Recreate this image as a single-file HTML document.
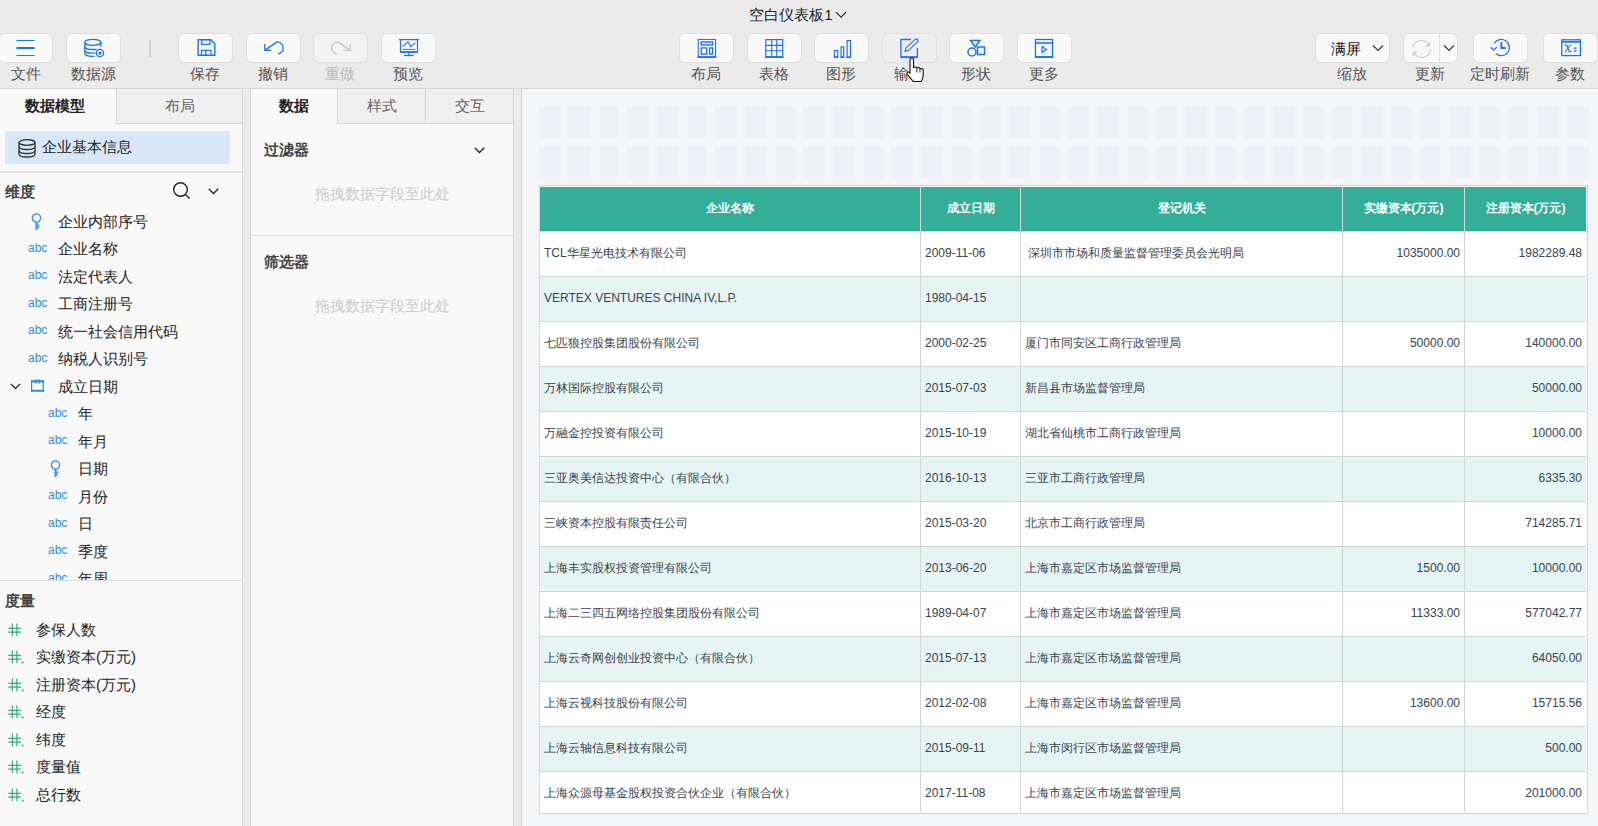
<!DOCTYPE html>
<html><head><meta charset="utf-8">
<style>
*{box-sizing:border-box;margin:0;padding:0}
html,body{width:1598px;height:826px;overflow:hidden;background:#ebebeb;font-family:"Liberation Sans",sans-serif;color:#333}
#title{position:absolute;left:-1px;top:6px;width:1598px;text-align:center;font-size:15px;color:#222;line-height:18px}
.tb{position:absolute;top:34px;width:53px;height:28px;background:#f9f9f9;border-radius:5px;box-shadow:0 0 0 1px #e0e0e0,0 1px 1px rgba(0,0,0,.10)}
.tb svg{position:absolute;left:50%;top:50%;transform:translate(-50%,-50%);overflow:visible}
.lbl{position:absolute;top:65px;width:80px;text-align:center;font-size:15px;line-height:17px;color:#555}
.sep{position:absolute;left:149px;top:40px;width:2px;height:17px;background:#d0d0d0}
#tbline{position:absolute;left:0;top:88px;width:1598px;height:1px;background:#d9d9d9}
.panel{position:absolute;top:88px;height:738px;background:#f9f9f9;border:1px solid #d6d6d6;border-bottom:none}
.tab{position:absolute;top:0;height:35px;line-height:34px;text-align:center;font-size:15px;color:#666;background:#f0f0f0;border-bottom:1px solid #d6d6d6}
.tab.on{background:#f9f9f9;color:#222;font-weight:bold;border-bottom:none}
.it{position:absolute;font-size:15px;line-height:18px;color:#222;white-space:nowrap}
.abc{position:absolute;font-size:12px;line-height:14px;color:#2a8cf3;letter-spacing:0;margin-top:-1px}
.hd{position:absolute;font-size:15px;line-height:18px;font-weight:bold;color:#444}
.ph{position:absolute;left:0;width:262px;text-align:center;font-size:15px;line-height:18px;color:#cbcbcb}
.hash{position:absolute;left:8px;width:16px;height:14px;margin-top:1px}
/* table */
#tbl{position:absolute;left:539px;top:185px;width:1049px;height:629px;border:1px solid #d4d4d4;padding-top:1px;padding-right:1px;background:#fff;overflow:hidden}
table{border-collapse:separate;border-spacing:0;table-layout:fixed;width:1046px;font-size:12px;color:#3a4350}
th{background:#33ae98;color:#fff;height:45px;font-weight:bold;border-left:1px solid #d8d8d8;border-bottom:1px solid #d4d4d4;text-align:center;padding:0 0 2px 0}
td{height:45px;border-left:1px solid #d4d4d4;border-bottom:1px solid #d4d4d4;padding:0 4px 2px 4px;white-space:nowrap;overflow:hidden}
th:first-child,td:first-child{border-left:none}
tr.a td{background:#e6f5f3}
td.r{text-align:right}
.sq{position:absolute;width:21.5px;height:32px;background:#eff0f5}
</style></head><body>
<div id="title">空白仪表板1 <svg width="12" height="8" viewBox="0 0 12 8" style="vertical-align:1px;margin-left:-2px"><path d="M1 1.2 L6 6.2 L11 1.2" fill="none" stroke="#222" stroke-width="1.2"/></svg></div>

<!-- left toolbar group -->
<div class="tb" style="left:-1px"><svg style="margin:-0.7px 0 0 0.5px" width="20" height="18" viewBox="0 0 20 18"><path d="M1.5 3.5H19.5M1.5 18.5H19.5" stroke="#1a73f5" stroke-width="1.2" fill="none" transform="translate(-1,-1)"/><path d="M0.5 10H18.5" stroke="#1a73f5" stroke-width="2" fill="none"/></svg></div><div class="lbl" style="left:-14px">文件</div>
<div class="tb" style="left:67px"><svg width="20" height="19" viewBox="0 0 20 19"><g fill="none" stroke="#1a73f5" stroke-width="1.3"><ellipse cx="8.8" cy="3.8" rx="8" ry="3"/><path d="M0.8 3.8V15M16.8 3.8V8"/><path d="M0.8 8.5C1.5 10.5 4.5 11 8 11H12.5"/><path d="M0.8 12.3C1.5 14.3 4.5 14.7 8 14.7H11"/><path d="M0.8 15C1.5 17 4 17.8 8 17.8H10.5"/><circle cx="15.9" cy="14.5" r="3.6"/></g><circle cx="15.9" cy="14.5" r="1.5" fill="#1a73f5"/></svg></div><div class="lbl" style="left:53px">数据源</div>
<div class="sep"></div>
<div class="tb" style="left:179px"><svg width="18" height="18" viewBox="0 0 18 18"><g fill="none" stroke="#1a73f5"><path d="M1.2 0.8H13.8L17.8 4.8V16.2H1.2Z" stroke-width="1.4"/><path d="M4.7 0.8V5.4H12.9V0.8" stroke-width="1.2"/><path d="M4.5 16.2V11.4H14.1V16.2M8.8 11.4V16.2" stroke-width="1.2"/></g></svg></div><div class="lbl" style="left:165px">保存</div>
<div class="tb" style="left:247px"><svg width="20" height="16" viewBox="0 0 20 16"><g fill="none" stroke="#1a73f5" stroke-width="1.3"><path d="M0.8 4.1V10.4H7.1"/><path d="M0.8 10.4L13 1.9A6.1 6.1 0 0 1 14.2 14"/></g></svg></div><div class="lbl" style="left:233px">撤销</div>
<div class="tb" style="left:314px;background:#f3f3f3"><svg width="20" height="16" viewBox="0 0 20 16"><g fill="none" stroke="#c5c9c9" stroke-width="1.3"><path d="M19.2 4.1V10.4H12.9"/><path d="M19.2 10.4L7 1.9A6.1 6.1 0 0 0 5.8 14"/></g></svg></div><div class="lbl" style="left:300px;color:#b8b8b8">重做</div>
<div class="tb" style="left:382px"><svg width="20" height="18" viewBox="0 0 20 18"><g fill="none" stroke="#1a73f5"><path d="M0 0.6H20" stroke-width="1.3"/><path d="M1.5 0.6V12.8H18.5V0.6" stroke-width="1.2"/><path d="M1.5 12.9H18.5" stroke-width="1.8"/><path d="M3.7 7.7L8.9 2.9L11.7 7.7L16.5 3.9" stroke-width="1.1"/><path d="M3.7 10.4H16.5" stroke-width="1"/><path d="M9.9 13.5V16.5" stroke-width="1.2"/><path d="M5.1 16.5H14.8" stroke-width="1.3"/></g></svg></div><div class="lbl" style="left:368px">预览</div>

<!-- middle group -->
<div class="tb" style="left:680px"><svg width="20" height="20" viewBox="0 0 20 20"><g fill="none" stroke="#1a73f5"><rect x="1.2" y="1.5" width="17.4" height="17.6" stroke-width="1.1"/><path d="M0.7 19.1H19.1" stroke-width="1.8"/><rect x="4.2" y="4" width="11.4" height="3" stroke-width="1.4"/><rect x="4.2" y="9.9" width="5.5" height="6.2" stroke-width="1.3"/><rect x="12.6" y="9.9" width="3" height="6.2" stroke-width="1.3"/></g></svg></div><div class="lbl" style="left:666px">布局</div>
<div class="tb" style="left:748px"><svg style="margin-left:-1px" width="20" height="20" viewBox="0 0 20 20"><g fill="none" stroke="#1a73f5"><rect x="1.8" y="1.6" width="16.9" height="17.5" stroke-width="1.2"/><path d="M1.2 19.1H19.3" stroke-width="1.8"/><path d="M7.75 1.6V19M12.75 1.6V19M1.8 7.4H18.7M1.8 12.7H18.7" stroke-width="1.1"/></g></svg></div><div class="lbl" style="left:734px">表格</div>
<div class="tb" style="left:815px"><svg width="20" height="20" viewBox="0 0 20 20"><g fill="none" stroke="#1a73f5" stroke-width="1.2"><rect x="2.5" y="12.6" width="3.2" height="6.6"/><rect x="9.1" y="8.9" width="2.6" height="10.3"/><rect x="15.1" y="2.6" width="3.4" height="16.6"/><path d="M1.9 19.2H6.3M8.5 19.2H12.3M14.5 19.2H19.1" stroke-width="1.6"/></g></svg></div><div class="lbl" style="left:801px">图形</div>
<div class="tb" style="left:883px;background:#efefef"><svg width="20" height="20" viewBox="0 0 20 20"><g fill="none" stroke="#1a73f5"><path d="M11 1.5H0.9V19.1H17.4V10" stroke-width="1.3"/><path d="M0.9 19.2H17.4" stroke-width="1.8"/><path d="M5 13.5L6.1 9.9L15.1 1.4C15.8 0.8 16.8 0.8 17.5 1.5C18.2 2.2 18.2 3.2 17.5 3.9L8.6 12.4Z" stroke-width="1.1" stroke-linejoin="round"/></g></svg></div><div class="lbl" style="left:869px">输出</div>
<div class="tb" style="left:950px"><svg width="20" height="18" viewBox="0 0 20 18"><g fill="none" stroke="#1a73f5" stroke-width="1.5"><path d="M3.5 1.5H13L8.25 8Z"/><circle cx="5" cy="13" r="4"/><rect x="10.5" y="8" width="7" height="7.5"/></g></svg></div><div class="lbl" style="left:936px">形状</div>
<div class="tb" style="left:1018px"><svg style="margin-left:-1px" width="20" height="20" viewBox="0 0 20 20"><g fill="none" stroke="#1a73f5"><rect x="1.5" y="1.5" width="17" height="17.4" stroke-width="1.3"/><path d="M1 19.1H19" stroke-width="1.7"/><path d="M1.5 5H18.5" stroke-width="1.6"/><path d="M8 8.5L12.6 11.5L8 14.5Z" stroke-width="1.2"/></g></svg></div><div class="lbl" style="left:1004px">更多</div>
<svg style="position:absolute;left:906px;top:57px" width="20" height="26" viewBox="0 0 20 26"><path d="M5.75 1C6.8 1 7.5 1.8 7.5 2.8V10.5C8 9.8 10.5 9.8 10.8 11C11.3 10.3 13.7 10.5 14 11.8C14.5 11.2 17 11.5 17.2 13V18.5C17.2 21 16 23 15.3 24.5H7.2C6 22.5 2.5 19 1.2 17.2C0.5 16 1.5 14.5 3 15.3L4 16.2V2.8C4 1.8 4.7 1 5.75 1Z" fill="#fff" stroke="#111" stroke-width="1.1" stroke-linejoin="round"/><path d="M10.8 11.5V15.5M14 12.2V15.5" stroke="#111" stroke-width="0.9"/></svg>

<!-- right group -->
<div class="tb" style="left:1316px;width:73px"><span style="position:absolute;left:15px;top:6px;font-size:15px;line-height:18px;color:#111">满屏</span><svg style="left:62px" width="12" height="8" viewBox="0 0 12 8"><path d="M1 1.5L6 6.5L11 1.5" fill="none" stroke="#333" stroke-width="1.1"/></svg></div><div class="lbl" style="left:1312px">缩放</div>
<div class="tb" style="left:1404px;width:53px"><svg style="left:17px" width="20" height="18" viewBox="0 0 20 18"><g fill="none" stroke="#d0d2d2" stroke-width="1.2"><path d="M1.8 9.2A8.5 8.5 0 0 1 17.3 5.2"/><path d="M19.3 10.4A8.5 8.5 0 0 1 3.5 14.2"/></g><g fill="#d0d2d2"><path d="M19.2 2.3V7.4H14.1Z"/><path d="M1.6 17.6V12.5H6.7Z"/></g></svg><div style="position:absolute;left:35px;top:0;width:1px;height:28px;background:#e2e2e2"></div><svg style="left:45px" width="12" height="8" viewBox="0 0 12 8"><path d="M1 1.5L6 6.5L11 1.5" fill="none" stroke="#333" stroke-width="1.1"/></svg></div><div class="lbl" style="left:1390px">更新</div>
<div class="tb" style="left:1474px"><svg width="20" height="20" viewBox="0 0 20 20"><g fill="none" stroke="#1a73f5" stroke-width="1.25"><path d="M3.25 5.5A8.1 8.1 0 1 1 4.8 15.5"/><path d="M-0.2 9.25L2.6 12.1L5.75 9.25"/><path d="M10.4 4V10H14.8" stroke-width="1.8"/></g></svg></div><div class="lbl" style="left:1460px">定时刷新</div>
<div class="tb" style="left:1544px;width:53px"><svg width="20" height="18" viewBox="0 0 20 18"><g fill="none" stroke="#1a73f5"><rect x="0.8" y="0.8" width="18.6" height="15.8" stroke-width="1.3"/><path d="M0.8 2.9H19.4" stroke-width="1.7"/><path d="M3.6 6.2C5.6 5.6 6.6 7.2 7.1 9.6C7.6 12 8.6 13.2 10.6 12.5" stroke-width="1.2"/><path d="M10.2 6C8.2 6.4 6.2 9.8 4.4 13.2" stroke-width="1.2"/><path d="M12.8 9.2H15.6M12.8 11.9H15.6" stroke-width="1.3"/></g></svg></div><div class="lbl" style="left:1530px">参数</div>

<div id="tbline"></div>

<!-- left panel -->
<div class="panel" style="left:-1px;width:244px">
  <div class="tab on" style="left:0;width:116px;padding-right:7px">数据模型</div>
  <div class="tab" style="left:116px;width:126px;border-left:1px solid #d6d6d6">布局</div>
  <div style="position:absolute;left:5px;top:42px;width:225px;height:33px;background:#d9e8f9"></div>
  <svg style="position:absolute;left:18px;top:50px" width="19" height="19" viewBox="0 0 19 19"><g fill="none" stroke="#333" stroke-width="1.3"><ellipse cx="9" cy="3.5" rx="8" ry="2.8"/><path d="M1 3.5V15C1 16.8 4.5 18 9 18S17 16.8 17 15V3.5"/><path d="M1 7.5C1 9.3 4.5 10.5 9 10.5S17 9.3 17 7.5"/><path d="M1 11.5C1 13.3 4.5 14.5 9 14.5S17 13.3 17 11.5"/></g></svg>
  <div class="it" style="left:42px;top:49px">企业基本信息</div>
  <div style="position:absolute;left:0;top:82px;width:242px;height:2px;background:#e4e4e4"></div>
  <div class="hd" style="left:5px;top:94px">维度</div>
  <svg style="position:absolute;left:173px;top:93px" width="18" height="18" viewBox="0 0 18 18"><g fill="none" stroke="#222" stroke-width="1.4"><circle cx="7.5" cy="7.5" r="6.8"/><path d="M12.5 12.5L16.5 16.5"/></g></svg>
  <svg style="position:absolute;left:208px;top:99px" width="12" height="7" viewBox="0 0 12 7"><path d="M0.8 0.8L5.5 5.5L10.2 0.8" fill="none" stroke="#222" stroke-width="1.3"/></svg>
  <div style="position:absolute;left:0;top:121px;width:242px;height:371px;overflow:hidden">
    <!-- rows: centers at 221..578 in page => relative to this box top (88+1+120=209) -->
    <svg style="position:absolute;left:30.5px;top:3px" width="11" height="17" viewBox="0 0 11 17"><g fill="none" stroke="#3c8ff0"><circle cx="5.5" cy="5" r="4.1" stroke-width="1.4"/><path d="M5.5 9V17" stroke-width="2"/><path d="M5.5 12.2H8.3M5.5 14.6H8" stroke-width="1.5"/></g></svg>
    <div class="it" style="left:58px;top:3px">企业内部序号</div>
    <div class="abc" style="left:28px;top:32px">abc</div><div class="it" style="left:58px;top:30px">企业名称</div>
    <div class="abc" style="left:28px;top:59px">abc</div><div class="it" style="left:58px;top:58px">法定代表人</div>
    <div class="abc" style="left:28px;top:87px">abc</div><div class="it" style="left:58px;top:85px">工商注册号</div>
    <div class="abc" style="left:28px;top:114px">abc</div><div class="it" style="left:58px;top:113px">统一社会信用代码</div>
    <div class="abc" style="left:28px;top:142px">abc</div><div class="it" style="left:58px;top:140px">纳税人识别号</div>
    <svg style="position:absolute;left:10px;top:172.5px" width="12" height="7" viewBox="0 0 12 7"><path d="M0.8 0.8L5.5 5.5L10.2 0.8" fill="none" stroke="#111" stroke-width="1.15"/></svg>
    <svg style="position:absolute;left:30px;top:169px" width="15" height="14" viewBox="0 0 15 14"><g fill="#1a8cf0"><rect x="1" y="1.2" width="12.8" height="2.2"/><rect x="1" y="10.8" width="12.8" height="1.9"/><rect x="1" y="1.2" width="1.2" height="11.5"/><rect x="12.6" y="1.2" width="1.2" height="11.5"/><rect x="4.9" y="0.3" width="1.3" height="4.3"/><rect x="8.4" y="0.3" width="1.3" height="4.3"/></g></svg>
    <div class="it" style="left:58px;top:168px">成立日期</div>
    <div class="abc" style="left:48px;top:197px">abc</div><div class="it" style="left:78px;top:195px">年</div>
    <div class="abc" style="left:48px;top:224px">abc</div><div class="it" style="left:78px;top:223px">年月</div>
    <svg style="position:absolute;left:50px;top:250px" width="11" height="17" viewBox="0 0 11 17"><g fill="none" stroke="#3c8ff0"><circle cx="5.5" cy="5" r="4.1" stroke-width="1.4"/><path d="M5.5 9V17" stroke-width="2"/><path d="M5.5 12.2H8.3M5.5 14.6H8" stroke-width="1.5"/></g></svg>
    <div class="it" style="left:78px;top:250px">日期</div>
    <div class="abc" style="left:48px;top:279px">abc</div><div class="it" style="left:78px;top:278px">月份</div>
    <div class="abc" style="left:48px;top:307px">abc</div><div class="it" style="left:78px;top:305px">日</div>
    <div class="abc" style="left:48px;top:334px">abc</div><div class="it" style="left:78px;top:333px">季度</div>
    <div class="abc" style="left:48px;top:362px">abc</div><div class="it" style="left:78px;top:360px">年周</div>
  </div>
  <div style="position:absolute;left:0;top:491px;width:242px;height:1px;background:#dedede"></div>
  <div class="hd" style="left:5px;top:503px">度量</div>
  <div class="hash" style="top:533px"><svg width="16" height="14" viewBox="0 0 16 14"><path d="M4.4 0.6V13.2M8.9 0.6V13.2M0.3 5.3H13M0.3 9.1H13" stroke="#35a78a" stroke-width="1.2" fill="none"/></svg></div><div class="it" style="left:36px;top:532px">参保人数</div>
  <div class="hash" style="top:560px"><svg width="16" height="14" viewBox="0 0 16 14"><path d="M4.4 0.6V13.2M8.9 0.6V13.2M0.3 5.3H13M0.3 9.1H13" stroke="#35a78a" stroke-width="1.2" fill="none"/><circle cx="14.6" cy="12.4" r="1" fill="#35a78a"/></svg></div><div class="it" style="left:36px;top:559px">实缴资本(万元)</div>
  <div class="hash" style="top:588px"><svg width="16" height="14" viewBox="0 0 16 14"><path d="M4.4 0.6V13.2M8.9 0.6V13.2M0.3 5.3H13M0.3 9.1H13" stroke="#35a78a" stroke-width="1.2" fill="none"/><circle cx="14.6" cy="12.4" r="1" fill="#35a78a"/></svg></div><div class="it" style="left:36px;top:587px">注册资本(万元)</div>
  <div class="hash" style="top:615px"><svg width="16" height="14" viewBox="0 0 16 14"><path d="M4.4 0.6V13.2M8.9 0.6V13.2M0.3 5.3H13M0.3 9.1H13" stroke="#35a78a" stroke-width="1.2" fill="none"/><circle cx="14.6" cy="12.4" r="1" fill="#35a78a"/></svg></div><div class="it" style="left:36px;top:614px">经度</div>
  <div class="hash" style="top:643px"><svg width="16" height="14" viewBox="0 0 16 14"><path d="M4.4 0.6V13.2M8.9 0.6V13.2M0.3 5.3H13M0.3 9.1H13" stroke="#35a78a" stroke-width="1.2" fill="none"/><circle cx="14.6" cy="12.4" r="1" fill="#35a78a"/></svg></div><div class="it" style="left:36px;top:642px">纬度</div>
  <div class="hash" style="top:670px"><svg width="16" height="14" viewBox="0 0 16 14"><path d="M4.4 0.6V13.2M8.9 0.6V13.2M0.3 5.3H13M0.3 9.1H13" stroke="#35a78a" stroke-width="1.2" fill="none"/><circle cx="14.6" cy="12.4" r="1" fill="#35a78a"/></svg></div><div class="it" style="left:36px;top:669px">度量值</div>
  <div class="hash" style="top:698px"><svg width="16" height="14" viewBox="0 0 16 14"><path d="M4.4 0.6V13.2M8.9 0.6V13.2M0.3 5.3H13M0.3 9.1H13" stroke="#35a78a" stroke-width="1.2" fill="none"/><circle cx="14.6" cy="12.4" r="1" fill="#35a78a"/></svg></div><div class="it" style="left:36px;top:697px">总行数</div>
</div>

<!-- middle panel -->
<div class="panel" style="left:250px;width:264px">
  <div class="tab on" style="left:0;width:86px">数据</div>
  <div class="tab" style="left:86px;width:88px;border-left:1px solid #d6d6d6">样式</div>
  <div class="tab" style="left:174px;width:88px;border-left:1px solid #d6d6d6">交互</div>
  <div class="hd" style="left:13px;top:52px">过滤器</div>
  <svg style="position:absolute;left:223px;top:58px" width="12" height="7" viewBox="0 0 12 7"><path d="M0.8 0.8L5.5 5.5L10.2 0.8" fill="none" stroke="#222" stroke-width="1.3"/></svg>
  <div class="ph" style="top:96px">拖拽数据字段至此处</div>
  <div style="position:absolute;left:0;top:146px;width:262px;height:1px;background:#e0e0e0"></div>
  <div class="hd" style="left:13px;top:164px">筛选器</div>
  <div class="ph" style="top:208px">拖拽数据字段至此处</div>
</div>

<!-- canvas -->
<div class="panel" style="left:521px;width:1078px;background:#f4f5f7;border-right:none">
<div class="sq" style="left:17.0px;top:17px"></div>
<div class="sq" style="left:46.4px;top:17px"></div>
<div class="sq" style="left:75.7px;top:17px"></div>
<div class="sq" style="left:105.1px;top:17px"></div>
<div class="sq" style="left:134.5px;top:17px"></div>
<div class="sq" style="left:163.9px;top:17px"></div>
<div class="sq" style="left:193.2px;top:17px"></div>
<div class="sq" style="left:222.6px;top:17px"></div>
<div class="sq" style="left:252.0px;top:17px"></div>
<div class="sq" style="left:281.3px;top:17px"></div>
<div class="sq" style="left:310.7px;top:17px"></div>
<div class="sq" style="left:340.1px;top:17px"></div>
<div class="sq" style="left:369.4px;top:17px"></div>
<div class="sq" style="left:398.8px;top:17px"></div>
<div class="sq" style="left:428.2px;top:17px"></div>
<div class="sq" style="left:457.5px;top:17px"></div>
<div class="sq" style="left:486.9px;top:17px"></div>
<div class="sq" style="left:516.3px;top:17px"></div>
<div class="sq" style="left:545.7px;top:17px"></div>
<div class="sq" style="left:575.0px;top:17px"></div>
<div class="sq" style="left:604.4px;top:17px"></div>
<div class="sq" style="left:633.8px;top:17px"></div>
<div class="sq" style="left:663.1px;top:17px"></div>
<div class="sq" style="left:692.5px;top:17px"></div>
<div class="sq" style="left:721.9px;top:17px"></div>
<div class="sq" style="left:751.2px;top:17px"></div>
<div class="sq" style="left:780.6px;top:17px"></div>
<div class="sq" style="left:810.0px;top:17px"></div>
<div class="sq" style="left:839.4px;top:17px"></div>
<div class="sq" style="left:868.7px;top:17px"></div>
<div class="sq" style="left:898.1px;top:17px"></div>
<div class="sq" style="left:927.5px;top:17px"></div>
<div class="sq" style="left:956.8px;top:17px"></div>
<div class="sq" style="left:986.2px;top:17px"></div>
<div class="sq" style="left:1015.6px;top:17px"></div>
<div class="sq" style="left:1045.0px;top:17px"></div>
<div class="sq" style="left:17.0px;top:57px"></div>
<div class="sq" style="left:46.4px;top:57px"></div>
<div class="sq" style="left:75.7px;top:57px"></div>
<div class="sq" style="left:105.1px;top:57px"></div>
<div class="sq" style="left:134.5px;top:57px"></div>
<div class="sq" style="left:163.9px;top:57px"></div>
<div class="sq" style="left:193.2px;top:57px"></div>
<div class="sq" style="left:222.6px;top:57px"></div>
<div class="sq" style="left:252.0px;top:57px"></div>
<div class="sq" style="left:281.3px;top:57px"></div>
<div class="sq" style="left:310.7px;top:57px"></div>
<div class="sq" style="left:340.1px;top:57px"></div>
<div class="sq" style="left:369.4px;top:57px"></div>
<div class="sq" style="left:398.8px;top:57px"></div>
<div class="sq" style="left:428.2px;top:57px"></div>
<div class="sq" style="left:457.5px;top:57px"></div>
<div class="sq" style="left:486.9px;top:57px"></div>
<div class="sq" style="left:516.3px;top:57px"></div>
<div class="sq" style="left:545.7px;top:57px"></div>
<div class="sq" style="left:575.0px;top:57px"></div>
<div class="sq" style="left:604.4px;top:57px"></div>
<div class="sq" style="left:633.8px;top:57px"></div>
<div class="sq" style="left:663.1px;top:57px"></div>
<div class="sq" style="left:692.5px;top:57px"></div>
<div class="sq" style="left:721.9px;top:57px"></div>
<div class="sq" style="left:751.2px;top:57px"></div>
<div class="sq" style="left:780.6px;top:57px"></div>
<div class="sq" style="left:810.0px;top:57px"></div>
<div class="sq" style="left:839.4px;top:57px"></div>
<div class="sq" style="left:868.7px;top:57px"></div>
<div class="sq" style="left:898.1px;top:57px"></div>
<div class="sq" style="left:927.5px;top:57px"></div>
<div class="sq" style="left:956.8px;top:57px"></div>
<div class="sq" style="left:986.2px;top:57px"></div>
<div class="sq" style="left:1015.6px;top:57px"></div>
<div class="sq" style="left:1045.0px;top:57px"></div>
</div>

<div id="tbl"><table>
<colgroup><col style="width:380px"><col style="width:100px"><col style="width:322px"><col style="width:122px"><col style="width:122px"></colgroup>
<tr><th>企业名称</th><th>成立日期</th><th>登记机关</th><th>实缴资本(万元)</th><th>注册资本(万元)</th></tr>
<tr><td>TCL华星光电技术有限公司</td><td>2009-11-06</td><td>&nbsp;深圳市市场和质量监督管理委员会光明局</td><td class="r">1035000.00</td><td class="r">1982289.48</td></tr>
<tr class="a"><td>VERTEX VENTURES CHINA IV,L.P.</td><td>1980-04-15</td><td></td><td class="r"></td><td class="r"></td></tr>
<tr><td>七匹狼控股集团股份有限公司</td><td>2000-02-25</td><td>厦门市同安区工商行政管理局</td><td class="r">50000.00</td><td class="r">140000.00</td></tr>
<tr class="a"><td>万林国际控股有限公司</td><td>2015-07-03</td><td>新昌县市场监督管理局</td><td class="r"></td><td class="r">50000.00</td></tr>
<tr><td>万融金控投资有限公司</td><td>2015-10-19</td><td>湖北省仙桃市工商行政管理局</td><td class="r"></td><td class="r">10000.00</td></tr>
<tr class="a"><td>三亚奥美信达投资中心（有限合伙）</td><td>2016-10-13</td><td>三亚市工商行政管理局</td><td class="r"></td><td class="r">6335.30</td></tr>
<tr><td>三峡资本控股有限责任公司</td><td>2015-03-20</td><td>北京市工商行政管理局</td><td class="r"></td><td class="r">714285.71</td></tr>
<tr class="a"><td>上海丰实股权投资管理有限公司</td><td>2013-06-20</td><td>上海市嘉定区市场监督管理局</td><td class="r">1500.00</td><td class="r">10000.00</td></tr>
<tr><td>上海二三四五网络控股集团股份有限公司</td><td>1989-04-07</td><td>上海市嘉定区市场监督管理局</td><td class="r">11333.00</td><td class="r">577042.77</td></tr>
<tr class="a"><td>上海云奇网创创业投资中心（有限合伙）</td><td>2015-07-13</td><td>上海市嘉定区市场监督管理局</td><td class="r"></td><td class="r">64050.00</td></tr>
<tr><td>上海云视科技股份有限公司</td><td>2012-02-08</td><td>上海市嘉定区市场监督管理局</td><td class="r">13600.00</td><td class="r">15715.56</td></tr>
<tr class="a"><td>上海云轴信息科技有限公司</td><td>2015-09-11</td><td>上海市闵行区市场监督管理局</td><td class="r"></td><td class="r">500.00</td></tr>
<tr><td>上海众源母基金股权投资合伙企业（有限合伙）</td><td>2017-11-08</td><td>上海市嘉定区市场监督管理局</td><td class="r"></td><td class="r">201000.00</td></tr>
</table></div>
</body></html>
